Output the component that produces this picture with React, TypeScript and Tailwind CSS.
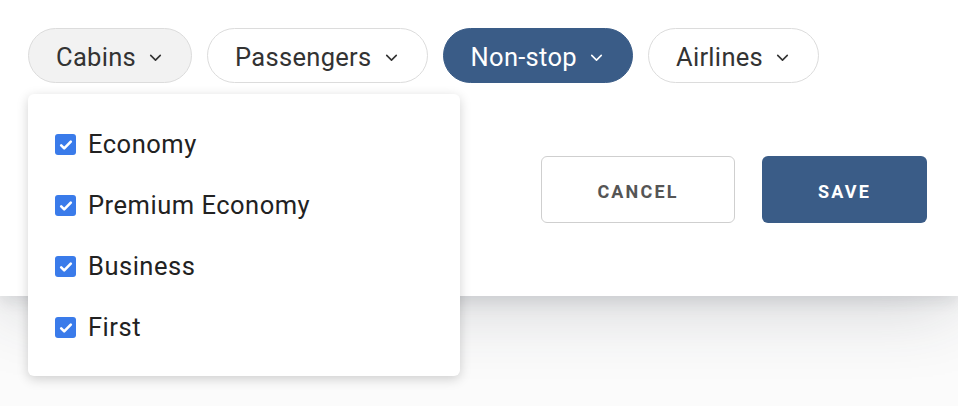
import React from "react";

const filters = [
  { label: "Cabins", active: false, open: true },
  { label: "Passengers", active: false, open: false },
  { label: "Non-stop", active: true, open: false },
  { label: "Airlines", active: false, open: false },
];

const cabins = ["Economy", "Premium Economy", "Business", "First"];

function Chevron({ className }: { className?: string }) {
  return (
    <svg viewBox="0 0 16 16" className={className} fill="none" stroke="currentColor" strokeWidth={1.5} strokeLinecap="round" strokeLinejoin="round">
      <path d="M3.5 6l4.5 4.5L12.5 6" />
    </svg>
  );
}

function Checkbox() {
  return (
    <span className="flex h-[21px] w-[21px] shrink-0 items-center justify-center rounded-[3px] bg-[#3a7bea]">
      <svg viewBox="0 0 16 16" className="h-[16px] w-[16px]" fill="none" stroke="white" strokeWidth={2.6} strokeLinecap="round" strokeLinejoin="round">
        <path d="M3.2 8.4l3 3L12.8 4.6" />
      </svg>
    </span>
  );
}

export default function App() {
  return (
    <div className="relative h-[406px] w-[958px] overflow-hidden bg-[#fbfbfb] font-['Roboto',sans-serif]">
      <div className="h-[296px] w-full bg-white shadow-[0_6px_14px_rgba(40,45,60,0.1),0_10px_70px_rgba(40,45,60,0.2)]">
        <div className="flex gap-[15px] pl-[28px] pt-[28px]">
          {filters.map((f) => (
            <button
              key={f.label}
              type="button"
              className={`flex h-[55px] items-center gap-[11px] rounded-full border pl-[27px] pr-[27px] pt-[3px] text-[25.5px] tracking-[0.012em] ${
                f.active
                  ? "border-[#3a5c87] bg-[#3a5c87] text-white"
                  : f.open
                    ? "border-[#dcdcdc] bg-[#f2f2f2] text-[#333]"
                    : "border-[#dcdcdc] bg-white text-[#333]"
              }`}
            >
              {f.label}
              <Chevron className="h-[17px] w-[17px]" />
            </button>
          ))}
        </div>

        <div className="mr-[31px] mt-[73px] flex justify-end gap-[27px]">
          <button
            type="button"
            className="h-[67px] w-[194px] rounded-md border border-[#cfcfcf] bg-white pt-[3px] text-[18px] font-bold tracking-[0.12em] text-[#555]"
          >
            CANCEL
          </button>
          <button
            type="button"
            className="h-[67px] w-[165px] rounded-md bg-[#3a5c87] pt-[3px] text-[18px] font-bold tracking-[0.12em] text-white"
          >
            SAVE
          </button>
        </div>
      </div>

      <div className="absolute left-[28px] top-[94px] flex h-[282px] w-[432px] flex-col justify-center gap-[33px] rounded-md bg-white pl-[27px] shadow-[0_3px_12px_rgba(0,0,0,0.18)]">
        {cabins.map((c) => (
          <label key={c} className="flex h-[28px] items-center gap-[12px] pt-[2px] text-[25.5px] tracking-[0.02em] text-[#222]">
            <Checkbox />
            {c}
          </label>
        ))}
      </div>
    </div>
  );
}
